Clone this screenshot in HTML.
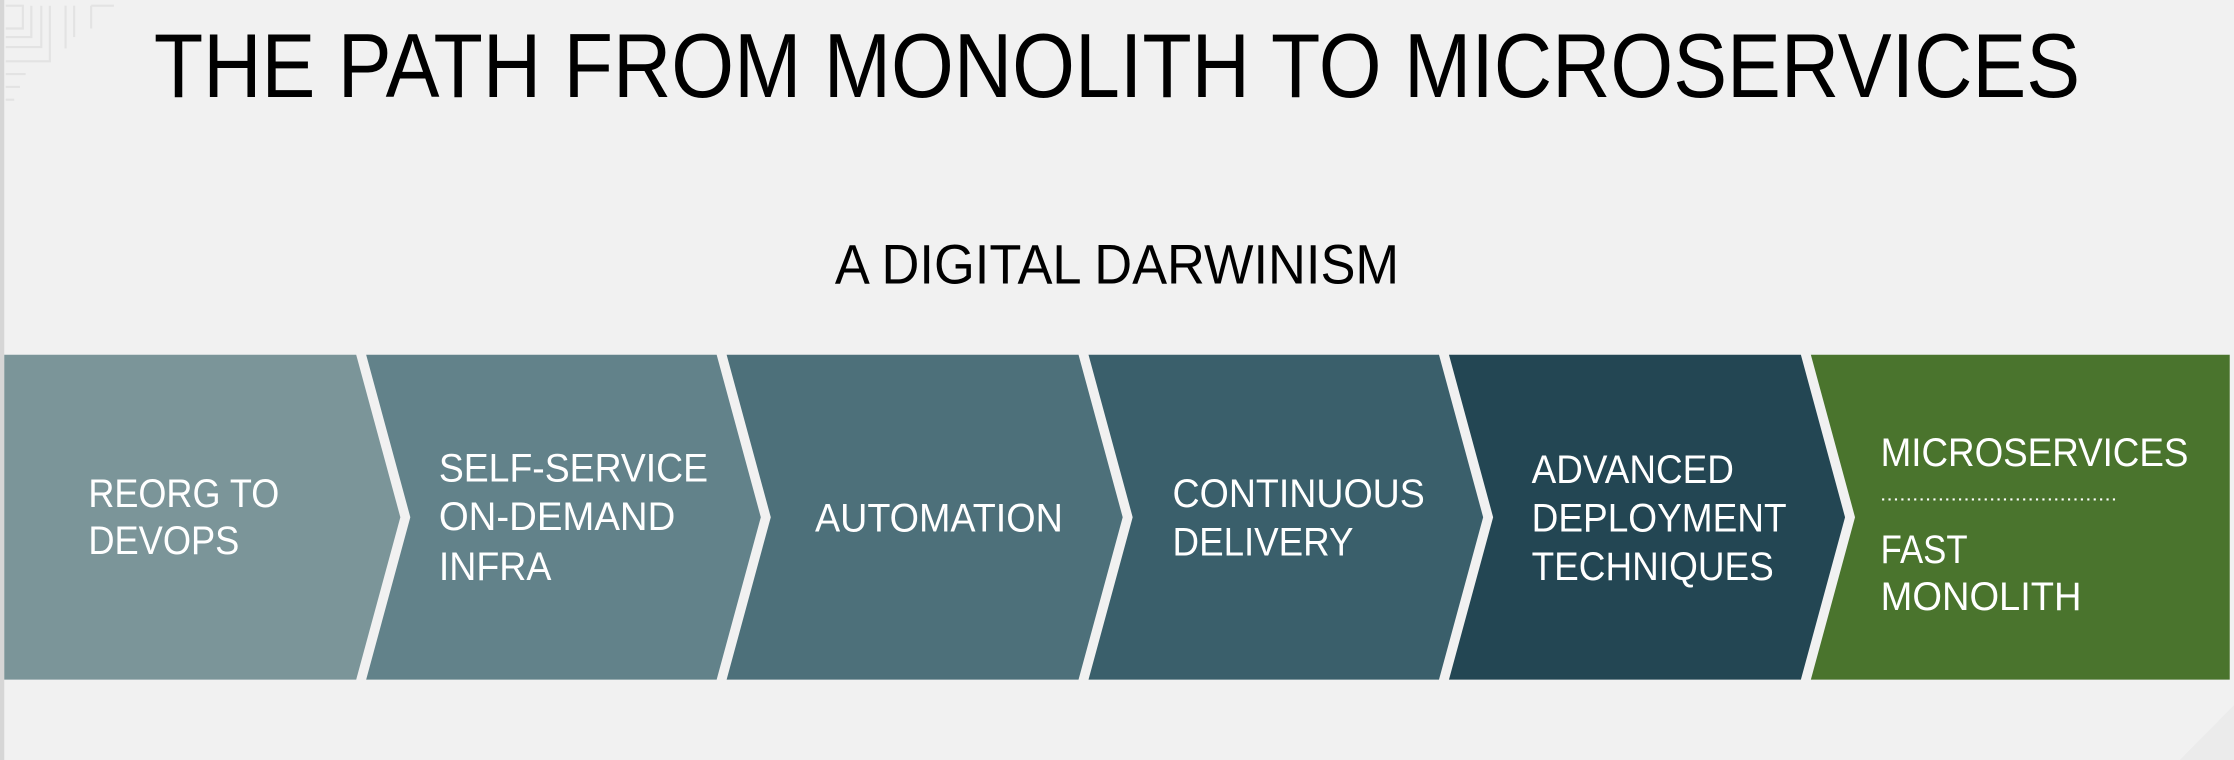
<!DOCTYPE html>
<html><head><meta charset="utf-8"><style>
html,body{margin:0;padding:0;width:2234px;height:760px;overflow:hidden;background:#f1f1f1}
svg{display:block}
text{font-family:"Liberation Sans",sans-serif}
</style></head><body>
<svg width="2234" height="760" viewBox="0 0 1568 533.4" preserveAspectRatio="none" xmlns="http://www.w3.org/2000/svg">
<rect x="0" y="0" width="1568" height="533.4" fill="#f1f1f1"/>
<rect x="0" y="0" width="3" height="533.4" fill="#d6d6d6"/>
<g stroke="#e3e3e3" stroke-width="1.5" fill="none">
<path d="M4 4H16V20H4"/><path d="M4 26H22V4"/><path d="M4 33H29V4"/><path d="M4 43H35V4"/><path d="M4 52H18"/><path d="M4 61H14"/><path d="M4 70H10"/><path d="M46 4V34"/><path d="M52 4V26"/><path d="M64 4H80"/><path d="M64 4V20"/>
</g>
<polygon points="0,80 55,0 0,0" fill="#f1f1f1" opacity="0"/>
<polygon points="1530,533.4 1568,495 1568,533.4" fill="#ebebeb"/>
<text x="784" y="68" text-anchor="middle" font-size="64" fill="#000" textLength="1352" lengthAdjust="spacingAndGlyphs">THE PATH FROM MONOLITH TO MICROSERVICES</text>
<text x="784" y="199" text-anchor="middle" font-size="39" fill="#000" textLength="396" lengthAdjust="spacingAndGlyphs">A DIGITAL DARWINISM</text>
<polygon points="3,249 250,249 281,363 250,477 3,477" fill="#7b9599"/>
<polygon points="257,249 503,249 534,363 503,477 257,477 288,363" fill="#62828a"/>
<polygon points="510,249 757,249 788,363 757,477 510,477 541,363" fill="#4d707a"/>
<polygon points="764,249 1010,249 1041,363 1010,477 764,477 795,363" fill="#3a5f6b"/>
<polygon points="1017,249 1264,249 1295,363 1264,477 1017,477 1048,363" fill="#234653"/>
<polygon points="1271,249 1565,249 1565,477 1271,477 1302,363" fill="#4a742d"/>
<g fill="#fff" font-size="28">
<text x="62" y="356" textLength="134" lengthAdjust="spacingAndGlyphs">REORG TO</text>
<text x="62" y="389" textLength="106" lengthAdjust="spacingAndGlyphs">DEVOPS</text>
<text x="308" y="338" textLength="189" lengthAdjust="spacingAndGlyphs">SELF-SERVICE</text>
<text x="308" y="372" textLength="166" lengthAdjust="spacingAndGlyphs">ON-DEMAND</text>
<text x="308" y="407" textLength="79" lengthAdjust="spacingAndGlyphs">INFRA</text>
<text x="572" y="373" textLength="174" lengthAdjust="spacingAndGlyphs">AUTOMATION</text>
<text x="823" y="356" textLength="177" lengthAdjust="spacingAndGlyphs">CONTINUOUS</text>
<text x="823" y="390" textLength="127" lengthAdjust="spacingAndGlyphs">DELIVERY</text>
<text x="1075" y="339" textLength="142" lengthAdjust="spacingAndGlyphs">ADVANCED</text>
<text x="1075" y="373" textLength="179" lengthAdjust="spacingAndGlyphs">DEPLOYMENT</text>
<text x="1075" y="407" textLength="170" lengthAdjust="spacingAndGlyphs">TECHNIQUES</text>
<text x="1320" y="327" textLength="216" lengthAdjust="spacingAndGlyphs">MICROSERVICES</text>
<text x="1320" y="395" textLength="61" lengthAdjust="spacingAndGlyphs">FAST</text>
<text x="1320" y="428" textLength="141" lengthAdjust="spacingAndGlyphs">MONOLITH</text>
</g>
<line x1="1321" y1="350.5" x2="1487" y2="350.5" stroke="#fff" stroke-width="1.5" stroke-dasharray="1.5 3"/>
</svg>
</body></html>
